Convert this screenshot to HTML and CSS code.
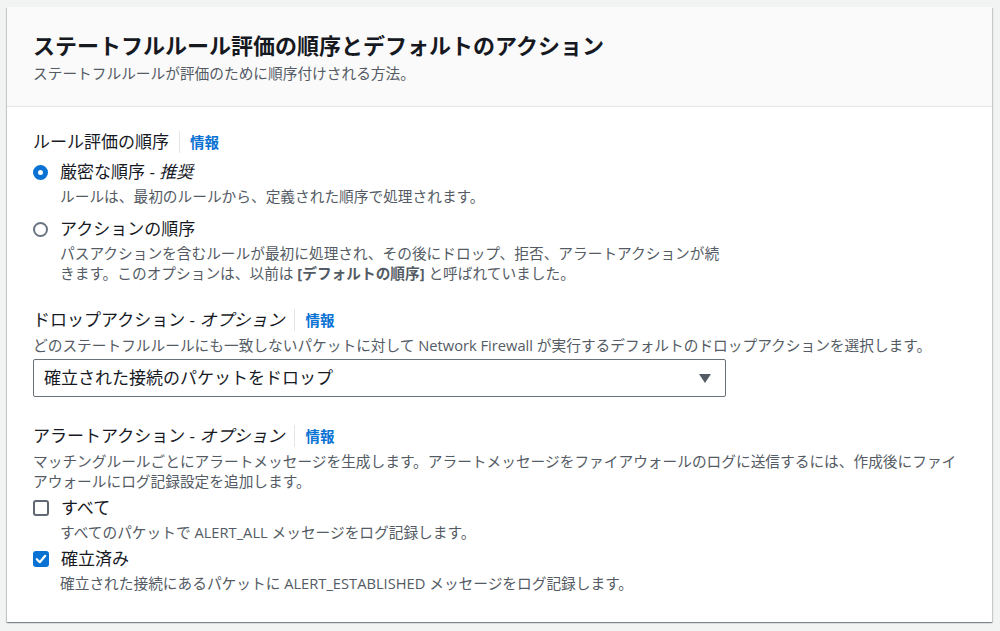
FILE: index.html
```html
<!DOCTYPE html>
<html lang="ja">
<head>
<meta charset="utf-8">
<link rel="stylesheet" href="styles.css">
</head>
<body>
<div class="card">
  <div class="card-header">
    <h2 class="title">ステートフルルール評価の順序とデフォルトのアクション</h2>
    <p class="subtitle">ステートフルルールが評価のために順序付けされる方法。</p>
  </div>
  <div class="card-body">
    <section class="field field-order">
      <div class="label-row">
        <span class="label">ルール評価の順序</span>
        <span class="divider"></span>
        <a class="info">情報</a>
      </div>
      <div class="constrained">
        <div class="option">
          <div class="option-row">
            <span class="radio checked"></span>
            <span class="option-label">厳密な順序 - <i>推奨</i></span>
          </div>
          <p class="option-desc">ルールは、最初のルールから、定義された順序で処理されます。</p>
        </div>
        <div class="option option-2">
          <div class="option-row">
            <span class="radio"></span>
            <span class="option-label">アクションの順序</span>
          </div>
          <p class="option-desc"><span class="line">パスアクションを含むルールが最初に処理され、その後にドロップ、拒否、アラートアクションが続</span><span class="line"><span>きます。このオプションは、以前は </span><b>[デフォルトの順序]</b><span> と呼ばれていました。</span></span></p>
        </div>
      </div>
    </section>

    <section class="field field-drop">
      <div class="label-row">
        <span class="label">ドロップアクション - <i>オプション</i></span>
        <span class="divider"></span>
        <a class="info">情報</a>
      </div>
      <p class="desc">どのステートフルルールにも一致しないパケットに対して Network Firewall が実行するデフォルトのドロップアクションを選択します。</p>
      <div class="select">
        <span class="select-text">確立された接続のパケットをドロップ</span>
        <svg class="caret" width="12" height="9" viewBox="0 0 12 9"><path d="M0 0H12L6 9Z" fill="#545b64"/></svg>
      </div>
    </section>

    <section class="field field-alert">
      <div class="label-row">
        <span class="label">アラートアクション - <i>オプション</i></span>
        <span class="divider"></span>
        <a class="info">情報</a>
      </div>
      <p class="desc">マッチングルールごとにアラートメッセージを生成します。アラートメッセージをファイアウォールのログに送信するには、作成後にファイアウォールにログ記録設定を追加します。</p>
      <div class="option option-cb">
        <div class="option-row">
          <span class="checkbox"></span>
          <span class="option-label">すべて</span>
        </div>
        <p class="option-desc">すべてのパケットで ALERT_ALL メッセージをログ記録します。</p>
      </div>
      <div class="option option-cb">
        <div class="option-row">
          <span class="checkbox checked"><svg width="16" height="16" viewBox="0 0 16 16"><path d="M3.8 8.2L6.8 11.2L12.2 4.8" fill="none" stroke="#fff" stroke-width="2.2" stroke-linecap="round" stroke-linejoin="round"/></svg></span>
          <span class="option-label">確立済み</span>
        </div>
        <p class="option-desc">確立された接続にあるパケットに ALERT_ESTABLISHED メッセージをログ記録します。</p>
      </div>
    </section>
  </div>
</div>
</body>
</html>
```

FILE: styles.css
```css
html, body {
  margin: 0;
  padding: 0;
}
body {
  background: #f2f3f3;
  font-family: "Open Sans", "Noto Sans CJK JP", sans-serif;
  color: #16191f;
  width: 1000px;
  height: 631px;
  overflow: hidden;
}
p, h2 { margin: 0; }

.card {
  margin: 7px 0 0 7px;
  width: 985px;
  height: 615px;
  background: #fff;
  box-sizing: border-box;
  box-shadow: 0 1px 1px 0 rgba(0, 28, 36, 0.3), 1px 1px 1px 0 rgba(0, 28, 36, 0.15), -1px 1px 1px 0 rgba(0, 28, 36, 0.15);
}

.card-header {
  background: #fafafa;
  border-bottom: 1px solid #e3e6e8;
  padding: 22px 26px 0;
  box-sizing: content-box;
  height: 77px;
}
.title {
  font-family: "Noto Sans CJK JP", sans-serif;
  font-size: 22px;
  line-height: 30px;
  font-weight: 700;
  color: #16191f;
}
.subtitle {
  margin-top: 4px;
  font-size: 14.7px;
  line-height: 20px;
  color: #545b64;
}

.card-body {
  padding: 23px 26px 0;
}

.label-row {
  display: flex;
  align-items: center;
  height: 24px;
}
.label {
  font-size: 17px;
  line-height: 24px;
  color: #16191f;
}
.divider {
  width: 1px;
  height: 22px;
  background: #e3e6e8;
  margin: 0 10px;
}
.info {
  font-family: "Noto Sans CJK JP", sans-serif;
  font-size: 14.5px;
  font-weight: 700;
  color: #0972d3;
  line-height: 20px;
}

.constrained {
  width: 693px;
}

.option {
  margin-top: 6px;
}
.option-2 {
  margin-top: 11px;
}
.option-row {
  display: flex;
  align-items: center;
  height: 24px;
}
.option-label {
  font-size: 17px;
  line-height: 24px;
  margin-left: 12px;
}
.option-desc {
  margin: 2px 0 0 27px;
  font-size: 14.7px;
  line-height: 20px;
  color: #545b64;
}
.option-desc .line {
  display: block;
  white-space: nowrap;
}
.option-desc b {
  font-weight: 700;
  color: #545b64;
}

.radio {
  width: 15px;
  height: 15px;
  box-sizing: border-box;
  border-radius: 50%;
  border: 2px solid #6b7582;
  background: #fff;
  flex: none;
}
.radio.checked {
  border: 5px solid #0972d3;
}

.checkbox {
  width: 16px;
  height: 16px;
  box-sizing: border-box;
  border-radius: 3px;
  border: 2px solid #5f6873;
  background: #fff;
  flex: none;
  display: flex;
  align-items: center;
  justify-content: center;
  overflow: hidden;
}
.checkbox.checked {
  border: none;
  background: #0972d3;
}

.field-drop {
  margin-top: 25px;
}
.field-alert {
  margin-top: 27px;
}

.desc {
  margin-top: 3px;
  font-size: 14.7px;
  line-height: 20px;
  color: #545b64;
}

.select {
  margin-top: 4px;
  width: 693px;
  height: 38px;
  box-sizing: border-box;
  border: 1px solid #687078;
  border-radius: 2px;
  display: flex;
  align-items: center;
  justify-content: space-between;
  padding: 0 14px 0 10px;
}
.select-text {
  font-size: 17px;
  line-height: 24px;
}

.option-cb {
  margin-top: 5px;
}
```
